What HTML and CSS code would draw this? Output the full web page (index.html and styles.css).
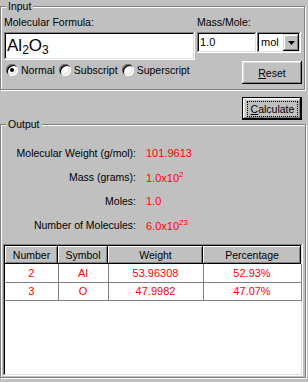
FILE: index.html
```html
<!DOCTYPE html>
<html lang="en">
<head>
    <meta charset="UTF-8">
    <meta name="viewport" content="width=device-width, initial-scale=1.0">
    <title>Molecular Weight Calculator</title>
    <link rel="stylesheet" href="styles.css">
</head>
<body>
    <div class="window">
        <fieldset class="group input-group">
            <legend>Input</legend>
            <div class="input-top">
                <div class="formula-col">
                    <label class="field-label" for="formula">Molecular Formula:</label>
                    <div class="field formula" id="formula">Al<sub>2</sub>O<sub>3</sub></div>
                </div>
                <div class="mass-col">
                    <label class="field-label" for="mass">Mass/Mole:</label>
                    <div class="mass-row">
                        <div class="field mass" id="mass">1.0</div>
                        <div class="field combo">
                            <span class="combo-value">mol</span>
                            <span class="combo-btn">
                                <svg width="7" height="4" viewBox="0 0 7 4"><polygon points="0,0 7,0 3.5,4" fill="#000"/></svg>
                            </span>
                        </div>
                    </div>
                </div>
            </div>
            <div class="input-bottom">
                <div class="radios">
                    <span class="radio-item"><span class="radio checked"></span>Normal</span>
                    <span class="radio-item"><span class="radio"></span>Subscript</span>
                    <span class="radio-item"><span class="radio"></span>Superscript</span>
                </div>
                <button class="btn"><u>R</u>eset</button>
            </div>
        </fieldset>

        <div class="calc-row">
            <button class="btn btn-default"><span class="focus"><u>C</u>alculate</span></button>
        </div>

        <fieldset class="group output-group">
            <legend>Output</legend>
            <div class="results">
                <span class="res-label">Molecular Weight (g/mol):</span>
                <span class="res-value">101.9613</span>
                <span class="res-label">Mass (grams):</span>
                <span class="res-value">1.0x10<sup>2</sup></span>
                <span class="res-label">Moles:</span>
                <span class="res-value">1.0</span>
                <span class="res-label">Number of Molecules:</span>
                <span class="res-value">6.0x10<sup>23</sup></span>
            </div>
            <div class="list">
                <table class="elements">
                    <colgroup>
                        <col class="c-num">
                        <col class="c-sym">
                        <col class="c-wt">
                        <col class="c-pct">
                    </colgroup>
                    <thead>
                        <tr><th>Number</th><th>Symbol</th><th>Weight</th><th>Percentage</th></tr>
                    </thead>
                    <tbody>
                        <tr><td>2</td><td>Al</td><td>53.96308</td><td>52.93%</td></tr>
                        <tr><td>3</td><td>O</td><td>47.9982</td><td>47.07%</td></tr>
                    </tbody>
                </table>
            </div>
        </fieldset>
    </div>
</body>
</html>
```

FILE: styles.css
```css
* {
    margin: 0;
    padding: 0;
    box-sizing: border-box;
}

body {
    font-family: "Liberation Sans", Arial, sans-serif;
    font-size: 10.5px;
    color: #000;
    background-color: #c0c0c0;
}

.window {
    width: 308px;
    height: 382px;
    overflow: hidden;
}

/* group boxes with etched border */
.group {
    width: 305px;
    border: 1px solid #808080;
    box-shadow: inset 1px 1px #fff, 1px 1px #fff;
}

.group legend {
    margin-left: 2px;
    padding: 0 2px;
    line-height: 13px;
    background-color: #c0c0c0;
}

.input-group {
    padding: 3px 2px 5px 3px;
}

.input-top {
    display: flex;
    gap: 2px;
}

.formula-col {
    width: 191px;
}

.field-label {
    display: block;
    height: 13px;
    line-height: 13px;
    margin-bottom: 3px;
}

.field {
    background-color: #fff;
    box-shadow: inset -1px -1px #fff, inset 1px 1px #808080, inset -2px -2px #dfdfdf, inset 2px 2px #000;
}

.formula {
    height: 28px;
    padding: 5px 0 0 3px;
    font-size: 17px;
    line-height: 18px;
}

.formula sub {
    font-size: 12px;
    vertical-align: -3px;
    line-height: 1;
}

.mass-row {
    display: flex;
}

.mass {
    width: 60px;
    height: 21px;
    padding: 3px 0 0 3px;
    font-size: 11px;
    line-height: 14px;
}

.combo {
    width: 44px;
    height: 21px;
    display: flex;
    align-items: flex-start;
    justify-content: space-between;
    padding: 2px;
}

.combo-value {
    font-size: 11px;
    line-height: 14px;
    padding: 1px 0 0 2px;
}

.combo-btn {
    width: 16px;
    height: 17px;
    display: flex;
    align-items: center;
    justify-content: center;
    background-color: #c0c0c0;
    box-shadow: inset -1px -1px #000, inset 1px 1px #dfdfdf, inset -2px -2px #808080, inset 2px 2px #fff;
}

.input-bottom {
    display: flex;
    justify-content: space-between;
    align-items: flex-start;
    margin-top: 1px;
}

.radios {
    display: flex;
    margin-top: 3px;
    margin-left: 2px;
}

.radio-item {
    display: flex;
    align-items: center;
    gap: 3px;
    margin-right: 4px;
    line-height: 12px;
}

.radio {
    position: relative;
    width: 12px;
    height: 12px;
    border-radius: 50%;
    background-color: #fff;
    box-shadow: inset 1px 1px #808080, inset -1px -1px #fff, inset 2px 2px #000, inset -2px -2px #dfdfdf;
}

.radio.checked::after {
    content: "";
    position: absolute;
    left: 4px;
    top: 4px;
    width: 4px;
    height: 4px;
    border-radius: 50%;
    background-color: #000;
}

.btn {
    width: 60px;
    height: 23px;
    border: none;
    font-family: inherit;
    font-size: 10.5px;
    color: #000;
    background-color: #c0c0c0;
    box-shadow: inset -1px -1px #000, inset 1px 1px #fff, inset -2px -2px #808080, inset 2px 2px #dfdfdf;
}

.btn u {
    text-decoration: underline;
}

.calc-row {
    display: flex;
    justify-content: flex-end;
    padding-right: 6px;
    margin-top: 7px;
}

.btn-default {
    border: 1px solid #000;
    box-shadow: inset -1px -1px #000, inset 1px 1px #fff, inset -2px -2px #808080, inset 2px 2px #dfdfdf;
}

.btn-default .focus {
    display: block;
    margin: 0 3px 0 4px;
    border: 1px dotted #000;
    line-height: 14px;
}

.output-group {
    margin-top: -2px;
    padding: 10px 2px 1px 3px;
}

.results {
    display: grid;
    grid-template-columns: 132px auto;
    grid-auto-rows: 24px;
    column-gap: 10px;
    align-items: center;
}

.res-label {
    text-align: right;
    white-space: nowrap;
}

.res-value {
    color: #ff0000;
    font-size: 11px;
}

.res-value sup {
    font-size: 8px;
    line-height: 1;
    vertical-align: 5px;
}

.list {
    width: 300px;
    height: 132px;
    margin: 7px 0 0 -1px;
    padding: 2px;
    background-color: #fff;
    box-shadow: inset -1px -1px #fff, inset 1px 1px #808080, inset -2px -2px #dfdfdf, inset 2px 2px #000;
}

.elements {
    width: 296px;
    table-layout: fixed;
    border-collapse: collapse;
}

.c-num { width: 53px; }
.c-sym { width: 50px; }
.c-wt { width: 95px; }
.c-pct { width: 98px; }

.elements th {
    height: 18px;
    font-weight: normal;
    background-color: #c0c0c0;
    box-shadow: inset -1px -1px #000, inset 1px 1px #fff, inset -2px -2px #808080;
}

.elements td {
    height: 18px;
    text-align: center;
    color: #ff0000;
    font-size: 11px;
    border-right: 1px solid #808080;
    border-bottom: 1px solid #808080;
}
```
